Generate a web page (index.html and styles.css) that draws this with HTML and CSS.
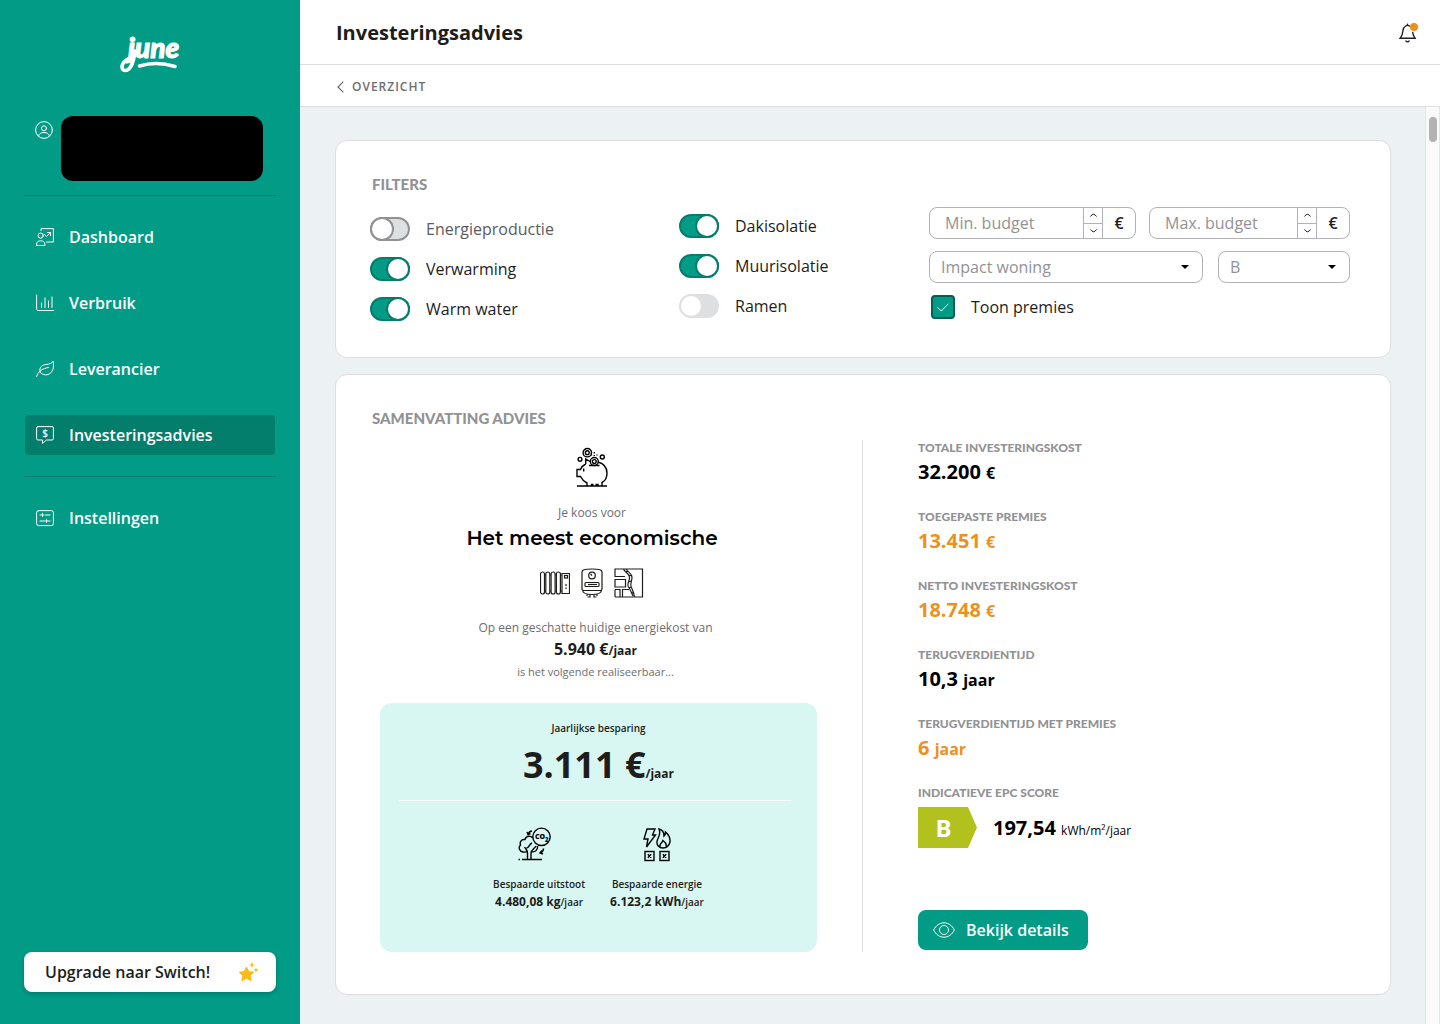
FILE: index.html
```html
<!DOCTYPE html>
<html lang="nl">
<head>
<meta charset="utf-8">
<meta name="viewport" content="width=device-width, initial-scale=1">
<title>Investeringsadvies</title>
<link rel="stylesheet" href="styles.css">
</head>
<body>
<div class="app">
  <aside class="sidebar">
    <a class="logo" href="#">
      <svg width="80" height="40" viewBox="0 0 80 40">
        <text class="logo-word" x="18" y="25">june</text>
        <path d="M25 18C24 27 21 37.500 15 37.500C10.500 37.500 11 30 17 26.500C20 24.800 23 23.500 26 20" fill="none" stroke="currentColor" stroke-width="3.600" stroke-linecap="round"/>
        <path d="M29.500 33C40 29.800 53 29.800 65 33.500" fill="none" stroke="currentColor" stroke-width="3.600" stroke-linecap="round"/>
      </svg>
    </a>
    <div class="account">
      <svg class="icon" width="18" height="18" viewBox="0 0 18 18"><circle cx="9" cy="9" r="8.400"/><circle cx="9" cy="7.300" r="2.500"/><path d="M3.500 15C4 12.700 6 11.500 9 11.500S14 12.700 14.500 15"/></svg>
      <div class="account-name"></div>
    </div>
    <nav class="nav">
      <a class="nav-item" href="#">
        <svg class="icon" width="18" height="18" viewBox="0 0 18 18"><path d="M5 2.500V.6H17.400V14H10.500"/><circle cx="4.700" cy="7.600" r="2.600"/><path d="M.6 17.400V16C.6 14 2.300 12.800 4.700 12.800S8.800 14 8.800 16V17.400Z"/><path d="M8.500 6.500L10.500 8.500L14.500 4.500M11.500 4.500H14.500V7.500"/></svg>
        Dashboard</a>
      <a class="nav-item" href="#">
        <svg class="icon" width="18" height="18" viewBox="0 0 18 18"><path d="M.6 1V15C.6 16 1.200 16.500 2 16.500H18M5.500 9V13.500M9 4V13.500M12.500 7V13.500M16 3V13.500"/></svg>
        Verbruik</a>
      <a class="nav-item" href="#">
        <svg class="icon" width="18" height="18" viewBox="0 0 18 18"><path d="M.6 16.500C2 11.500 6 8.500 12.500 7.500M4 12C3 7.500 5.500 5 10 4.500C13 4.200 16 3.500 17 1C18.500 8 16.500 13 12 14.500C9 15.500 5.500 14.500 4 12Z"/></svg>
        Leverancier</a>
      <a class="nav-item nav-item-active" href="#">
        <svg class="icon" width="18" height="18" viewBox="0 0 18 18"><path d="M2 .6H16A1.400 1.400 0 0 1 17.400 2V12.600A1.400 1.400 0 0 1 16 14H10.500L6.500 17.400V14H2A1.400 1.400 0 0 1 .6 12.600V2A1.400 1.400 0 0 1 2 .6Z"/><text class="icon-dollar" x="9" y="11">$</text></svg>
        Investeringsadvies</a>
    </nav>
    <nav class="nav nav-secondary">
      <a class="nav-item" href="#">
        <svg class="icon" width="18" height="18" viewBox="0 0 18 18"><rect x=".6" y="1.600" width="16.800" height="15" rx="2"/><path d="M4 6H8M6.500 4.300V7.700M9.500 6H14M4 12H9.500M14 12H10.500M10.500 10.300V13.700"/></svg>
        Instellingen</a>
    </nav>
    <button class="upgrade" type="button">
      Upgrade naar Switch!
      <svg width="20" height="20" viewBox="0 0 20 20" fill="#fbbc16"><path d="M7.500 5L9.800 9.600L14.800 10.200L11.200 13.700L12.200 18.700L7.500 16.300L2.900 18.700L3.800 13.700L.3 10.200L5.300 9.600Z" stroke="#fbbc16" stroke-linejoin="round"/><path d="M13 0L13.900 2.300L16 3L13.900 3.800L13 6L12.100 3.800L10 3L12.100 2.300ZM17 5.500L17.800 7.300L19.500 8L17.800 8.700L17 10.500L16.200 8.700L14.500 8L16.200 7.300Z"/></svg>
    </button>
  </aside>

  <div class="main">
    <header class="topbar">
      <h1 class="page-title">Investeringsadvies</h1>
      <button class="bell" type="button" aria-label="Meldingen">
        <svg width="20" height="20" viewBox="0 0 20 20" fill="none" stroke="#1d1d1b" stroke-width="1.400" stroke-linecap="round"><path d="M10.500 3C8.500 1.500 4.500 3 4 7.500C3.700 11 3.300 12.500 1.200 15.200H16C14.800 13.500 14 12.500 13.700 9.500M8.500 1.300V2M7 18C7.500 19.200 9.500 19.200 10 18"/><circle cx="15" cy="4" r="4" fill="#ee9020" stroke="none"/></svg>
      </button>
    </header>
    <div class="crumbs">
      <a class="back" href="#"><svg width="7" height="12" viewBox="0 0 7 12" fill="none" stroke="currentColor" stroke-width="1.200"><path d="M6.300 .7L1 6L6.300 11.300"/></svg>OVERZICHT</a>
    </div>

    <div class="scroll-area">
      <main class="content">
        <section class="card filters">
          <h2 class="card-title">FILTERS</h2>
          <div class="filter-grid">
            <div class="toggles toggles-first">
              <label class="toggle toggle-muted"><input class="switch switch-outline" type="checkbox">Energieproductie</label>
              <label class="toggle"><input class="switch" type="checkbox" checked>Verwarming</label>
              <label class="toggle"><input class="switch" type="checkbox" checked>Warm water</label>
            </div>
            <div class="toggles toggles-second">
              <label class="toggle"><input class="switch" type="checkbox" checked>Dakisolatie</label>
              <label class="toggle"><input class="switch" type="checkbox" checked>Muurisolatie</label>
              <label class="toggle"><input class="switch" type="checkbox">Ramen</label>
            </div>
            <div class="fields">
              <div class="field-row budget-row">
                <div class="field">
                  <input class="number" type="number" placeholder="Min. budget" aria-label="Min. budget">
                  <span class="stepper">
                    <button class="step" type="button" aria-label="Verhoog minimum"><svg width="7" height="4" viewBox="0 0 7 4"><path d="M.5 3.500Q3.500 -1 6.500 3.500"/></svg></button>
                    <button class="step" type="button" aria-label="Verlaag minimum"><svg width="7" height="4" viewBox="0 0 7 4"><path d="M.5 .5Q3.500 5 6.500 .5"/></svg></button>
                  </span>
                  <span class="unit">€</span>
                </div>
                <div class="field">
                  <input class="number" type="number" placeholder="Max. budget" aria-label="Max. budget">
                  <span class="stepper">
                    <button class="step" type="button" aria-label="Verhoog maximum"><svg width="7" height="4" viewBox="0 0 7 4"><path d="M.5 3.500Q3.500 -1 6.500 3.500"/></svg></button>
                    <button class="step" type="button" aria-label="Verlaag maximum"><svg width="7" height="4" viewBox="0 0 7 4"><path d="M.5 .5Q3.500 5 6.500 .5"/></svg></button>
                  </span>
                  <span class="unit">€</span>
                </div>
              </div>
              <div class="field-row select-row">
                <div class="field select-field">
                  <select class="select" aria-label="Impact woning"><option>Impact woning</option></select>
                  <svg class="caret" width="8" height="4" viewBox="0 0 8 4"><path d="M0 0H8L4 4Z"/></svg>
                </div>
                <div class="field select-field">
                  <select class="select" aria-label="EPC label"><option>B</option></select>
                  <svg class="caret" width="8" height="4" viewBox="0 0 8 4"><path d="M0 0H8L4 4Z"/></svg>
                </div>
              </div>
              <label class="toggle premium">
                <span class="check"><input class="checkbox" type="checkbox" checked><svg class="check-mark" width="12" height="9" viewBox="0 0 12 9"><path d="M.5 4.500L4.200 8L11.500 .7"/></svg></span>
                Toon premies</label>
            </div>
          </div>
        </section>

        <section class="card summary">
          <h2 class="card-title">SAMENVATTING ADVIES</h2>
          <div class="summary-grid">
            <div class="advice">
              <div class="choice">
                <svg class="line-icon" width="32" height="40" viewBox="0 0 32 40"><circle cx="11.300" cy="5.700" r="4.200"/><circle cx="11.300" cy="5.700" r="1.900"/><circle cx="4" cy="12.300" r="1.900"/><circle cx="26.300" cy="10" r="2"/><circle cx="18.300" cy="14.500" r="4"/><circle cx="18.300" cy="14.500" r="1.900"/><path d="M18.300 5V6.500M18.300 8V9M15.500 7.500V8.500M21 7.500V8.500M13 18.500H23.500M9.700 17V12L14 14.500M22 15C27.500 16.500 31 20.500 31 26C31 31 29 34 26 35.500V39M9.700 17C7 18.300 5.500 20 4.500 22.500H1V29.500H4.500C6 32.500 8 34.500 11 36V39M1 39H31M15.500 39V37.500H17.500M19.500 37.500H22V39M7.700 21.500V24.500"/></svg>
                <p class="note">Je koos voor</p>
                <h3 class="choice-title">Het meest economische</h3>
                <div class="measures">
                  <svg class="line-icon thin" width="30" height="24" viewBox="0 0 30 24"><rect x=".5" y="1" width="4" height="22" rx="2"/><rect x="5.800" y="1" width="4" height="22" rx="2"/><rect x="11.100" y="1" width="4" height="22" rx="2"/><rect x="16.400" y="1" width="4" height="22" rx="2"/><path d="M22 2.500H29.500V22.500H22ZM4.500 4H6M9.800 4H11M15 4H16.500M20.400 4H22M4.500 20H6M9.800 20H11M15 20H16.500M20.400 20H22M26 13V15M26 16.500V18"/><rect x="24.500" y="4.500" width="3" height="2.500"/></svg>
                  <svg class="line-icon thin" width="22" height="30" viewBox="0 0 22 30"><path d="M1 4C1 2 3 1 11 1S21 2 21 4V21C21 22 20 22.500 19 22.500H3C2 22.500 1 22 1 21ZM1.500 22.500C2 25 5 26.500 11 26.500S20 25 20.500 22.500M6 26V28M9 26.500V29H6.500M13 26.500V29H15.500M16 26V28"/><circle cx="11" cy="7.500" r="3.300"/><path d="M11 7.500L9.500 6"/><rect x="4" y="14.500" width="14" height="4" rx="1"/><path d="M7 16.500H16"/></svg>
                  <svg class="line-icon thin" width="30" height="30" viewBox="0 0 30 30"><path d="M9 1H28.500V29H1M9 1H1V8.500H11M1 11.500H11.500V19H1ZM1 21.500H6V29M1 21.500V29M8.500 29V21.500H15M9.500 1C11 5 15 5 15.500 9C16 13 13 15 14 18C16 21 17 24 19 28M12 1C14 4.500 18 5 18 9.500C18 13 16 15 17 18.500C18.500 22 20 25 20.500 29M12 4L14 3M15 8L17.500 7M14.500 14L17 13M15 20L17.500 19M18 25L20 24"/></svg>
                </div>
              </div>
              <div class="cost">
                <p class="note">Op een geschatte huidige energiekost van</p>
                <p class="cost-value">5.940 €<span class="per">/jaar</span></p>
                <p class="note note-small">is het volgende realiseerbaar...</p>
              </div>
              <div class="savings">
                <p class="tiny">Jaarlijkse besparing</p>
                <p class="savings-value">3.111 €<span class="per">/jaar</span></p>
                <hr class="savings-line">
                <div class="savings-items">
                  <div class="saving">
                    <svg class="line-icon" width="42" height="36" viewBox="0 0 42 36"><circle cx="23.500" cy="9.800" r="8.700"/><text class="icon-co" x="17" y="12">CO</text><text class="icon-two" x="27" y="15">2</text><path d="M14 4C12 4 11 5 10 7M9 5L10 7.500L12.500 6.500M25.500 21.500C25.500 24 24.500 25 22.500 26M24 23.500L22 26L25 27M14.500 11C13 8.500 8 8.500 7 12.500C3 12 1.500 15.500 2.500 18C0 20.500 1.500 24.500 5 25C7 25.300 8.500 25 9.500 24M9.500 32.500V26C9.500 23 7.500 22 6.500 20M13 32.500V26C13 23 17 21.500 18 19M8.500 21C11.500 21 11 17 14 16M13.500 24.500C17 26 20 22.500 19.500 19M4 32.500H24M.5 32.500H2"/></svg>
                    <p class="tiny">Bespaarde uitstoot</p>
                    <p class="saving-value">4.480,08 kg<span class="unit-tiny">/jaar</span></p>
                  </div>
                  <div class="saving">
                    <svg class="line-icon" width="28" height="36" viewBox="0 0 28 36"><path d="M4 2H12L9.500 8H12.500L3.500 20L5 12H1ZM16 2C21 3 21 7 21 9C22 8 22.500 6.500 22.500 5C26 8 27.500 11 27 15C26 19 23 21 20 21C16 21 13.500 18 14 14.500C14.500 10.500 18.500 8 16 2ZM17 19.500C16.500 16 19 16.500 20 13.500C22 15 24 17 23 19.500"/><rect x="2" y="24.500" width="9" height="9"/><rect x="17" y="24.500" width="9" height="9"/><path d="M4.800 27.300L8.200 30.700M8.200 27.300L4.800 30.700M19.800 27.300L23.200 30.700M23.200 27.300L19.800 30.700"/></svg>
                    <p class="tiny">Bespaarde energie</p>
                    <p class="saving-value">6.123,2 kWh<span class="unit-tiny">/jaar</span></p>
                  </div>
                </div>
              </div>
            </div>
            <div class="figures">
              <dl class="metrics">
                <div class="metric"><dt>TOTALE INVESTERINGSKOST</dt><dd>32.200 <small>€</small></dd></div>
                <div class="metric metric-accent"><dt>TOEGEPASTE PREMIES</dt><dd>13.451 <small>€</small></dd></div>
                <div class="metric metric-accent"><dt>NETTO INVESTERINGSKOST</dt><dd>18.748 <small>€</small></dd></div>
                <div class="metric"><dt>TERUGVERDIENTIJD</dt><dd>10,3 <small>jaar</small></dd></div>
                <div class="metric metric-accent"><dt>TERUGVERDIENTIJD MET PREMIES</dt><dd>6 <small>jaar</small></dd></div>
                <div class="metric"><dt>INDICATIEVE EPC SCORE</dt><dd class="epc"><span class="epc-badge">B</span><span class="epc-value">197,54 <span class="epc-unit">kWh/m²/jaar</span></span></dd></div>
              </dl>
              <button class="details" type="button">
                <svg width="22" height="16" viewBox="0 0 22 16" fill="none" stroke="currentColor"><path d="M.6 8C3 3.500 6.500 .8 11 .8S19 3.500 21.400 8C19 12.500 15.500 15.200 11 15.200S3 12.500 .6 8Z"/><circle cx="11" cy="8" r="4.500"/></svg>
                Bekijk details</button>
            </div>
          </div>
        </section>
      </main>
      <div class="track"><div class="thumb"></div></div>
    </div>
  </div>
</div>
</body>
</html>
```
FILE: styles.css
```css
:root {
  --teal: #019b86;
  --teal-dark: #037d6c;
  --line: #dcdee0;
  --field-line: #b1b1b7;
  --grey: #929295;
  --ink: #1d1d1b;
  --orange: #ee9020;
}

* { box-sizing: border-box; }

body {
  margin: 0;
  background: #fff;
  color: var(--ink);
  font: 400 16px/24px "Open Sans", sans-serif;
}

h1, h2, h3, p, dl, dd { margin: 0; }
a { color: inherit; text-decoration: none; }
button, input, select { font: inherit; color: inherit; }
svg { display: block; flex: none; }

.app {
  display: flex;
  min-height: 100vh;
  padding-right: 12px;
}

/* Sidebar */
.sidebar {
  display: flex;
  flex-direction: column;
  flex: none;
  width: 300px;
  padding: 33px 24px 32px;
  background: var(--teal);
  color: #fff;
}
.logo { align-self: center; }
.logo svg { overflow: visible; }
.logo-word {
  fill: currentColor;
  stroke: currentColor;
  stroke-width: 1px;
  font: italic 900 28px Lato, sans-serif;
}
.icon {
  fill: none;
  stroke: currentColor;
  stroke-linecap: round;
  stroke-linejoin: round;
}
.icon-dollar {
  fill: currentColor;
  stroke: none;
  font: 600 10px "Open Sans", sans-serif;
  text-anchor: middle;
}
.account {
  display: flex;
  gap: 8px;
  margin-top: 43px;
  padding: 0 13px 14px 11px;
  border-bottom: 1px solid var(--teal-dark);
}
.account .icon { margin-top: 5px; }
.account-name {
  flex: 1;
  height: 65px;
  border-radius: 12px;
  background: #000;
}
.nav {
  display: flex;
  flex-direction: column;
  gap: 26px;
  padding: 21px 1px;
}
.nav-secondary { border-top: 1px solid var(--teal-dark); }
.nav-item {
  display: flex;
  align-items: center;
  gap: 15px;
  height: 40px;
  padding: 0 11px;
  border-radius: 4px;
  font-weight: 600;
}
.nav-item-active { background: var(--teal-dark); }
.upgrade {
  display: flex;
  align-items: center;
  justify-content: space-between;
  height: 40px;
  margin-top: auto;
  padding: 0 17px 0 21px;
  border: 0;
  border-radius: 8px;
  background: #fff;
  box-shadow: 0 2px 4px rgba(0, 0, 0, .2);
  color: var(--ink);
  font-weight: 600;
}

/* Header */
.main {
  display: flex;
  flex: 1;
  flex-direction: column;
  min-width: 0;
}
.topbar {
  display: flex;
  align-items: center;
  justify-content: space-between;
  height: 65px;
  padding: 2px 21px 0 36px;
  border-bottom: 1px solid var(--line);
}
.page-title { font-size: 20px; font-weight: 700; }
.bell {
  padding: 0;
  border: 0;
  background: none;
}
.crumbs {
  display: flex;
  align-items: center;
  height: 42px;
  padding: 2px 37px 0;
  border-bottom: 1px solid var(--line);
}
.back {
  display: flex;
  align-items: center;
  gap: 8px;
  color: #6d6d70;
  font-size: 12px;
  font-weight: 600;
  letter-spacing: 1px;
}

/* Page body */
.scroll-area {
  display: flex;
  flex: 1;
}
.content {
  flex: 1;
  min-width: 0;
  padding: 33px 34px 29px 35px;
  background: #ecf1f4;
}
.track {
  flex: none;
  width: 15px;
  padding: 10px 3px;
  border: solid #e4e4e4;
  border-width: 0 1px;
  background: #fafafa;
}
.thumb {
  width: 8px;
  height: 25px;
  border-radius: 4px;
  background: #b3b3b3;
}
.card {
  padding: 31px 40px 36px 34px;
  border: 1px solid var(--line);
  border-radius: 12px;
  background: #fff;
}
.card + .card { margin-top: 16px; }
.card-title {
  padding-left: 2px;
  color: var(--grey);
  font: 900 15px/24px Lato, sans-serif;
}

/* Filters */
.filter-grid {
  display: grid;
  grid-template-columns: 309fr 250fr 421fr;
  margin-top: 11px;
}
.toggles {
  display: grid;
  gap: 16px;
  align-content: start;
}
.toggles-first { padding-top: 10px; }
.toggles-second { padding-top: 7px; }
.toggle {
  display: flex;
  align-items: center;
  gap: 16px;
}
.toggle-muted { color: #5b5b5d; }
.switch {
  flex: none;
  width: 40px;
  height: 24px;
  margin: 0;
  border: 2px solid #dedfe1;
  border-radius: 12px;
  appearance: none;
  background: #dedfe1;
}
.switch::before {
  content: "";
  display: block;
  width: 20px;
  height: 20px;
  border-radius: 50%;
  background: #fff;
}
.switch-outline { border-color: #929295; }
.switch-outline::before { box-shadow: 0 0 0 2px #929295; }
.switch:checked { border-color: var(--teal-dark); background: var(--teal); }
.switch:checked::before {
  margin-left: auto;
  box-shadow: 0 0 0 2px var(--teal-dark);
}
.fields {
  display: grid;
  gap: 12px;
  align-content: start;
}
.field-row { display: grid; }
.budget-row { grid-template-columns: 207fr 201fr; gap: 13px; }
.select-row { grid-template-columns: 274fr 132fr; gap: 15px; }
.field {
  display: flex;
  height: 32px;
  min-width: 0;
  overflow: hidden;
  border: 1px solid var(--field-line);
  border-radius: 8px;
}
.number {
  flex: 1;
  min-width: 0;
  padding: 0 15px;
  border: 0;
  appearance: textfield;
  background: none;
}
.number::-webkit-inner-spin-button { appearance: none; }
.number::placeholder { color: var(--grey); }
.stepper {
  display: flex;
  flex-direction: column;
  width: 20px;
  border: solid var(--field-line);
  border-width: 0 1px;
}
.step {
  display: grid;
  flex: 1;
  place-items: center;
  padding: 0;
  border: 0;
  background: none;
}
.step + .step { border-top: 1px solid var(--field-line); }
.step path { fill: none; stroke: var(--ink); }
.unit {
  width: 32px;
  line-height: 30px;
  text-align: center;
  font-weight: 600;
}
.select-field { display: grid; align-items: center; }
.select, .caret { grid-area: 1 / 1; }
.select {
  width: 100%;
  height: 30px;
  padding: 0 28px 0 11px;
  border: 0;
  appearance: none;
  background: none;
  color: var(--grey);
}
.caret {
  justify-self: end;
  margin-right: 13px;
  pointer-events: none;
}
.premium { padding-left: 2px; }
.check { display: grid; place-items: center; }
.checkbox, .check-mark { grid-area: 1 / 1; }
.checkbox {
  width: 24px;
  height: 24px;
  margin: 0;
  border: 2px solid #025f53;
  border-radius: 4px;
  appearance: none;
  background: var(--teal);
}
.check-mark { fill: none; stroke: #fff; }

/* Summary */
.summary { padding-bottom: 42px; }
.summary-grid {
  display: grid;
  grid-template-columns: 492fr 488fr;
  margin-top: 10px;
}
.advice {
  padding: 7px 45px 0 10px;
  text-align: center;
}
.line-icon {
  fill: none;
  stroke: #000;
  stroke-width: 1.400px;
}
.thin { stroke-width: 1.200px; stroke: var(--ink); }
.choice { padding-right: 13px; }
.choice > .line-icon { margin: 0 auto; }
.note {
  color: #6d6d70;
  font-size: 12px;
  line-height: 20px;
}
.note-small { font-size: 11px; }
.choice .note { margin-top: 16px; }
.choice-title {
  margin-top: 3px;
  color: #000;
  font: 600 20px/24px Montserrat, Inter, sans-serif;
}
.measures {
  display: flex;
  align-items: center;
  justify-content: center;
  gap: 11px;
  margin-top: 18px;
}
.cost { padding-right: 6px; margin-top: 20px; }
.cost-value { font-weight: 700; line-height: 22px; }
.per { font-size: 12px; }
.savings {
  margin-top: 21px;
  padding: 16px 0 41px;
  border-radius: 12px;
  background: #d9f7f2;
}
.tiny {
  font-size: 10px;
  font-weight: 600;
  line-height: 18px;
}
.savings-value {
  margin-top: 4px;
  font-size: 36px;
  font-weight: 700;
  line-height: 48px;
}
.savings-line {
  height: 1px;
  margin: 2px 26px 0 19px;
  border: 0;
  background: #fff;
}
.savings-items {
  display: flex;
  justify-content: center;
  gap: 25px;
  margin-top: 26px;
}
.saving .line-icon { margin: 0 auto 12px; }
.saving-value {
  font-size: 12px;
  font-weight: 700;
  line-height: 18px;
}
.unit-tiny { font-size: 10px; font-weight: 600; }
.icon-co, .icon-two {
  fill: #000;
  stroke: none;
  font: 900 7px "Open Sans", sans-serif;
}
.icon-two { font-size: 6px; }
.figures {
  padding-left: 55px;
  border-left: 1px solid var(--line);
}
.metric { height: 69px; }
.metric dt {
  color: var(--grey);
  font: 900 12px/16px Lato, sans-serif;
}
.metric dd {
  margin-top: 2px;
  color: #000;
  font-size: 20px;
  font-weight: 700;
  line-height: 28px;
}
.metric small { font-size: 16px; }
.metric-accent dd { color: var(--orange); }
.metric .epc {
  display: flex;
  align-items: center;
  gap: 16px;
  margin-top: 6px;
}
.epc-badge {
  width: 59px;
  padding-right: 8px;
  clip-path: polygon(0 0, 50px 0, 100% 50%, 50px 100%, 0 100%);
  background: #b2c11e;
  color: #fff;
  font-size: 24px;
  line-height: 41px;
  text-align: center;
}
.epc-value { padding-top: 3px; }
.epc-unit { font-size: 12px; font-weight: 400; }
.details {
  display: flex;
  align-items: center;
  gap: 11px;
  height: 40px;
  margin-top: 56px;
  padding: 0 19px 0 15px;
  border: 0;
  border-radius: 8px;
  background: var(--teal);
  color: #fff;
  font-weight: 600;
}
```
